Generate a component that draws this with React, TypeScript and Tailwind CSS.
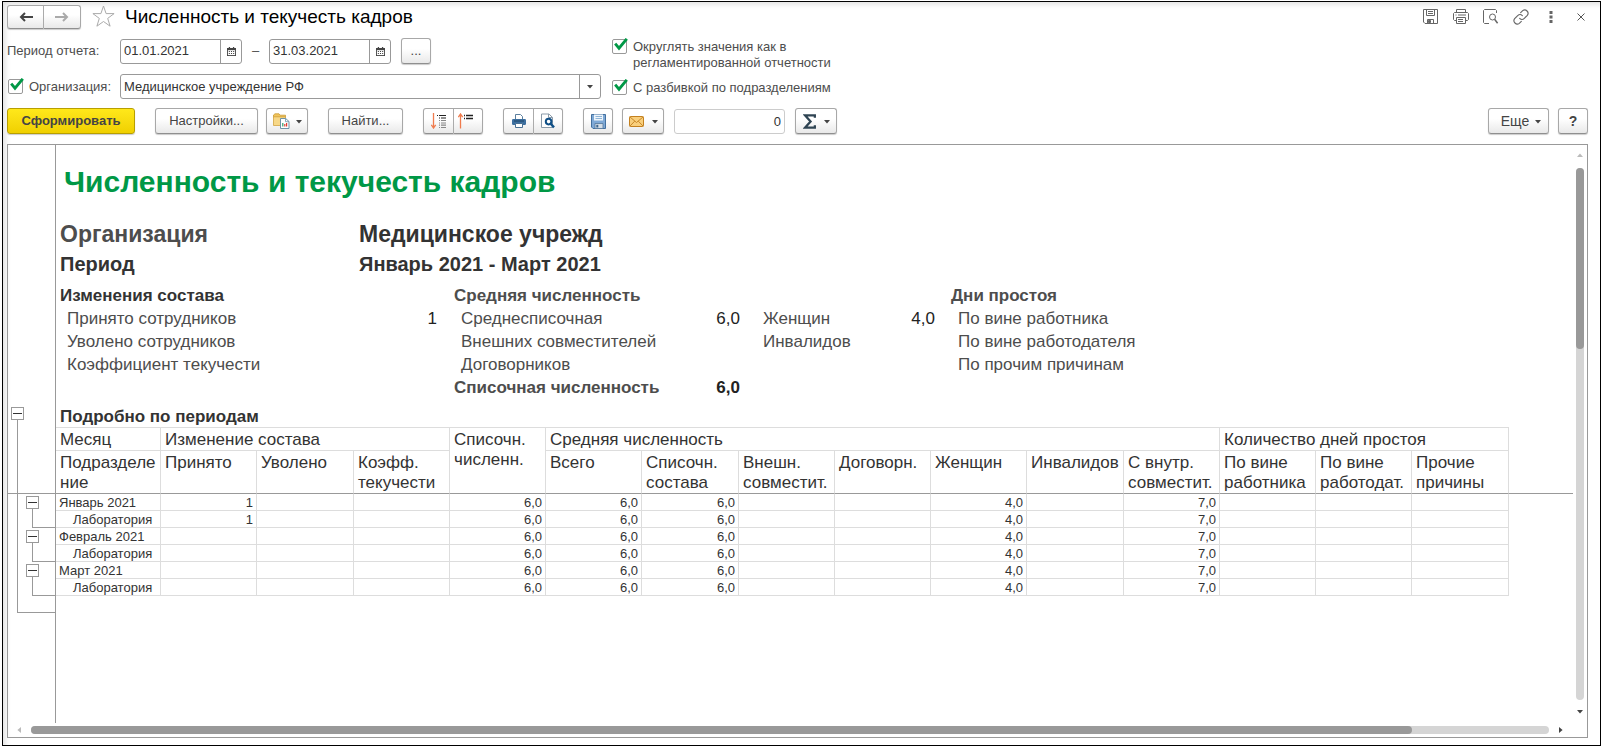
import { useState, type ReactNode } from 'react'
import clsx from 'clsx'

interface ReportRow {
  label: string
  nested?: boolean
  hired?: string
}

const rows: ReportRow[] = [
  { label: 'Январь 2021', hired: '1' },
  { label: 'Лаборатория', nested: true, hired: '1' },
  { label: 'Февраль 2021' },
  { label: 'Лаборатория', nested: true },
  { label: 'Март 2021' },
  { label: 'Лаборатория', nested: true },
]

const rowValues = (row: ReportRow) => [
  row.hired ?? '', '', '', '6,0', '6,0', '6,0', '', '', '4,0', '', '7,0', '', '', '',
]

function Caret({ className }: { className?: string }) {
  return (
    <svg className={clsx('shrink-0', className)} width="6" height="4" viewBox="0 0 6 4" aria-hidden="true">
      <path d="M0 0h6L3 3.6z" fill="#444" />
    </svg>
  )
}

function ToolButton({
  children,
  className,
  label,
}: {
  children: ReactNode
  className?: string
  label?: string
}) {
  return (
    <button
      type="button"
      aria-label={label}
      className={clsx(
        'flex shrink-0 items-center justify-center border border-[#a8a8a8] border-b-[#8f8f8f] bg-linear-to-b from-white from-40% to-[#e9e9e9] text-[#444] shadow-[0_1px_1px_#ccc]',
        className
      )}
    >
      {children}
    </button>
  )
}

function CheckBox({ id }: { id: string }) {
  const [checked, setChecked] = useState(true)
  return (
    <span className="relative block size-[15px] shrink-0">
      <input
        id={id}
        type="checkbox"
        checked={checked}
        onChange={(e) => setChecked(e.target.checked)}
        className="block size-[15px] appearance-none rounded-xs border border-[#999] bg-white"
      />
      {checked && (
        <svg className="pointer-events-none absolute -top-px left-[2px]" width="14" height="13" viewBox="0 0 14 13" aria-hidden="true">
          <path d="M1.2 5.6L5 10.2L12.8.8" fill="none" stroke="#009846" strokeWidth="2.8" />
        </svg>
      )}
    </span>
  )
}

function DateField({ label, value }: { label: string; value: string }) {
  return (
    <div className="flex h-[25px] w-[122px] shrink-0 rounded-[3px] border border-[#999] bg-white">
      <input aria-label={label} defaultValue={value} className="w-[99px] min-w-0 pl-[3px] text-[13px] text-[#333] outline-none" />
      <button type="button" aria-label="Выбрать дату" className="flex flex-1 items-center justify-center border-l border-[#999]">
        <svg width="9" height="9" viewBox="0 0 10 10" aria-hidden="true">
          <path d="M0 1h2V0h1.4v1h3.2V0H8v1h2v9H0z" fill="#444" />
          <path d="M1 3.5h8V9H1z" fill="#fff" />
          <path d="M2 4.5h1.2v1H2zM4.4 4.5h1.2v1H4.4zM6.8 4.5H8v1H6.8zM2 6.8h1.2v1H2zM4.4 6.8h1.2v1H4.4zM6.8 6.8H8v1H6.8z" fill="#444" />
        </svg>
      </button>
    </div>
  )
}

function FolderReportIcon() {
  return (
    <svg width="17" height="16" viewBox="0 0 17 16" aria-hidden="true">
      <path d="M.5 3V2L2 .8h4L7 2.2h5.5v2H.5z" fill="#f2c55c" stroke="#c99a35" strokeWidth=".8" />
      <path d="M.5 3.8h12v8.7H.5z" fill="#f7d888" stroke="#d3a441" strokeWidth=".8" />
      <path d="M7.5 5.5h5.2l3.3 3v7H7.5z" fill="#fff" stroke="#6f93a8" />
      <path d="M12.5 5.5v3.2H16" fill="none" stroke="#6f93a8" strokeWidth=".8" />
      <path d="M9.8 10v3.5" stroke="#2f9e6b" strokeWidth="1.2" />
      <path d="M11.8 11v2.5" stroke="#e03c31" strokeWidth="1.2" />
      <path d="M13.6 10v3.5" stroke="#e03c31" strokeWidth="1.2" />
    </svg>
  )
}

function ExpandIcon() {
  return (
    <svg width="16" height="16" viewBox="0 0 16 16" aria-hidden="true">
      <path d="M2.5 0v14M.3 11.8L2.5 15l2.2-3.2" fill="none" stroke="#ef7b4d" strokeWidth="1.3" />
      <path d="M6 2.5h1M8 2.5h7M8 5h1M10 5h5" stroke="#222" strokeWidth="1.2" />
      <path d="M8 7.5h1M10 7.5h5M8 10h1M10 10h5M8 12.2h1M10 12.2h5M8 14.5h1M10 14.5h5" stroke="#888" strokeWidth="1.2" />
    </svg>
  )
}

function CollapseIcon() {
  return (
    <svg width="16" height="16" viewBox="0 0 16 16" aria-hidden="true">
      <path d="M2.5 15.5V1.5M.3 4.2L2.5 1l2.2 3.2" fill="none" stroke="#ef7b4d" strokeWidth="1.3" />
      <path d="M6 2.5h1M8 2.5h7M6 5.5h1M8 5.5h7" stroke="#222" strokeWidth="1.3" />
    </svg>
  )
}

function PrinterIcon() {
  return (
    <svg width="14" height="14" viewBox="0 0 14 14" aria-hidden="true">
      <path d="M3.5 5.5v-5h5l2 2v3" fill="#fff" stroke="#5b7f9e" />
      <rect y="5" width="14" height="6" rx="1.2" fill="#3d6f9f" />
      <path d="M2 7h10" stroke="#1d4467" />
      <path d="M3.5 9.5h7v4h-7z" fill="#fff" stroke="#4a7194" />
    </svg>
  )
}

function PreviewIcon() {
  return (
    <svg width="14" height="16" viewBox="0 0 14 16" aria-hidden="true">
      <path d="M.5 1h7.4l3.6 3.4v10.1H.5z" fill="#fff" stroke="#8a9aa8" />
      <path d="M7.5 1v3.5h4" fill="none" stroke="#8a9aa8" />
      <circle cx="7.6" cy="8.6" r="2.8" fill="#fff" stroke="#0f4f86" strokeWidth="2" />
      <path d="M9.7 10.8L13 14.4" stroke="#0f4f86" strokeWidth="2.4" />
    </svg>
  )
}

function DisketteIcon() {
  return (
    <svg width="15" height="15" viewBox="0 0 15 15" aria-hidden="true">
      <path d="M.5.5h14v14H2L.5 13z" fill="#7fa9d6" stroke="#43709f" />
      <path d="M3 .5h9v6H3z" fill="#eef5fb" />
      <path d="M4.5 2.5H11M4.5 4.5H11" stroke="#8fb4d6" />
      <path d="M4 9.5h8v5H4z" fill="#d3dde6" stroke="#54779a" strokeWidth=".8" />
      <path d="M5.3 10.8h2v2.7h-2z" fill="#3d6690" />
    </svg>
  )
}

function EnvelopeIcon() {
  return (
    <svg width="15" height="11" viewBox="0 0 15 11" aria-hidden="true">
      <rect x=".5" y=".5" width="14" height="10" rx=".8" fill="#f9cf7c" stroke="#c3801f" />
      <path d="M1 1l6.500 5.500L14 1M1 10l4.700-4.800M14 10L9.300 5.200" fill="none" stroke="#c3801f" strokeWidth=".9" />
    </svg>
  )
}

function SigmaIcon() {
  return (
    <svg width="13" height="15" viewBox="0 0 12 14" aria-hidden="true">
      <path d="M11 3.600V1.200H1.800L7 7l-5.200 5.800H11v-2.400" fill="none" stroke="#2f4453" strokeWidth="2.100" />
    </svg>
  )
}

const action = 'flex w-[15px] justify-center'

function WindowActions() {
  return (
    <div className="flex items-center gap-[15px]">
      <button type="button" aria-label="Сохранить" className={action}>
        <svg width="15" height="15" viewBox="0 0 15 15" fill="none" stroke="#666" aria-hidden="true">
          <path d="M.5.5h14v14H2L.5 13z" />
          <path d="M3.5.5v6h8v-6M5 2.5h5M5 4.5h5M4.5 14.500v-4h6v4" />
          <path d="M5.5 11.5h2v2h-2z" fill="#666" />
        </svg>
      </button>
      <button type="button" aria-label="Печать" className={action}>
        <svg className="shrink-0" width="16" height="15" viewBox="0 0 16 15" fill="none" stroke="#666" aria-hidden="true">
          <path d="M3.5 3.5v-3h9v3M3.5 11.5h-2l-1-1v-6l1-1h13l1 1v6l-1 1h-2M2.5 6h1M5 6h8" />
          <path d="M3.5 8.5h9v6h-9zM5 10.5h5M5 12.5h5" />
        </svg>
      </button>
      <button type="button" aria-label="Предварительный просмотр" className={action}>
        <svg className="shrink-0" width="16" height="15" viewBox="0 0 16 15" fill="none" stroke="#666" aria-hidden="true">
          <path d="M6 14.500H1.500l-1-1V1.500l1-1h11l1 1V4" />
          <circle cx="9.5" cy="8" r="3" />
          <path d="M11.6 10.3l3 4" strokeWidth="1.5" />
        </svg>
      </button>
      <button type="button" aria-label="Получить ссылку" className={action}>
        <svg className="shrink-0" width="16" height="16" viewBox="0 0 24 24" fill="none" stroke="#666" strokeWidth="1.7" strokeLinecap="round" aria-hidden="true">
          <path d="M10 14a5 5 0 0 0 7 0l4.500-4.500a5 5 0 0 0-7-7l-3 3" />
          <path d="M14 10a5 5 0 0 0-7 0l-4.500 4.500a5 5 0 0 0 7 7l3-3" />
        </svg>
      </button>
      <button type="button" aria-label="Меню" className={action}>
        <svg width="4" height="12" viewBox="0 0 4 12" fill="#666" aria-hidden="true">
          <path d="M.5 0h3v3h-3zM.5 4.500h3v3h-3zM.5 9h3v3h-3z" />
        </svg>
      </button>
      <button type="button" aria-label="Закрыть" className={action}>
        <svg width="8" height="8" viewBox="0 0 8 8" stroke="#555" aria-hidden="true">
          <path d="M.5.5l7 7M7.500.5l-7 7" />
        </svg>
      </button>
    </div>
  )
}

function TreeToggle() {
  return (
    <button type="button" aria-label="Свернуть группу" className="flex size-[13px] items-center justify-center border border-[#999] bg-white">
      <span className="block h-px w-[9px] bg-[#333]" />
    </button>
  )
}

// Grouping brackets to the left of the sheet
function GroupGutter() {
  return (
    <div className="w-12 shrink-0 border-r border-[#999]">
      <div className="flex h-[349px] flex-col border-b border-[#999] pt-[262px] pl-[3px]">
        <TreeToggle />
        <div className="ml-[6px] flex-1 border-l border-[#999]" />
      </div>
      <div className="ml-[9px] h-[119px] border-b border-l border-[#999]">
        {[0, 1, 2].map((group) => (
          <div key={group} className="flex h-[34px] flex-col pt-[2px] pl-[8px]">
            <TreeToggle />
            <div className="ml-[6px] flex-1 border-b border-l border-[#999]" />
          </div>
        ))}
      </div>
    </div>
  )
}

function SummaryLine({ label, value, total }: { label: string; value?: string; total?: boolean }) {
  return (
    <div className={clsx('flex h-[23px] items-center justify-between', total ? 'font-bold' : 'pl-[7px]')}>
      <dt>{label}</dt>
      <dd className="text-[#222]">{value}</dd>
    </div>
  )
}

function Summary() {
  return (
    <div className="flex text-[17px] text-[#4d4d4d]">
      <section className="w-[377px]">
        <h3 className="h-[23px] leading-[23px] font-bold text-[#333]">Изменения состава</h3>
        <dl>
          <SummaryLine label="Принято сотрудников" value="1" />
          <SummaryLine label="Уволено сотрудников" />
          <SummaryLine label="Коэффициент текучести" />
        </dl>
      </section>
      <section className="ml-[17px] w-[286px]">
        <h3 className="h-[23px] leading-[23px] font-bold">Средняя численность</h3>
        <dl>
          <SummaryLine label="Среднесписочная" value="6,0" />
          <SummaryLine label="Внешних совместителей" />
          <SummaryLine label="Договорников" />
          <SummaryLine label="Списочная численность" value="6,0" total />
        </dl>
      </section>
      <dl className="ml-4 w-[179px] pt-[23px]">
        <SummaryLine label="Женщин" value="4,0" />
        <SummaryLine label="Инвалидов" />
      </dl>
      <section className="ml-4">
        <h3 className="h-[23px] leading-[23px] font-bold">Дни простоя</h3>
        <dl>
          <SummaryLine label="По вине работника" />
          <SummaryLine label="По вине работодателя" />
          <SummaryLine label="По прочим причинам" />
        </dl>
      </section>
    </div>
  )
}

const th = 'border-r border-b border-[#ddd] pl-1 pt-[2px] align-top font-normal'
const thLast = 'border-r border-b border-r-[#ddd] border-b-[#999] pl-1 pt-[2px] align-top font-normal'

function ReportTable() {
  return (
    <table className="w-full table-fixed border-separate border-spacing-0 text-left text-[#333]">
      <colgroup>
        <col className="w-[105px]" />
        <col className="w-[96px]" />
        <col className="w-[97px]" />
        <col className="w-[96px]" />
        <col className="w-[96px]" />
        <col className="w-[96px]" />
        <col className="w-[97px]" />
        <col className="w-[96px]" />
        <col className="w-[96px]" />
        <col className="w-[96px]" />
        <col className="w-[97px]" />
        <col className="w-[96px]" />
        <col className="w-[96px]" />
        <col className="w-[96px]" />
        <col className="w-[97px]" />
        <col />
      </colgroup>
      <thead className="text-[17px] leading-5">
        <tr className="h-6">
          <th className={clsx(th, 'border-t')}>Месяц</th>
          <th colSpan={3} className={clsx(th, 'border-t')}>Изменение состава</th>
          <th rowSpan={2} className={clsx(thLast, 'border-t border-t-[#ddd]')}>Списочн. численн.</th>
          <th colSpan={7} className={clsx(th, 'border-t')}>Средняя численность</th>
          <th colSpan={3} className={clsx(th, 'border-t')}>Количество дней простоя</th>
          <td />
        </tr>
        <tr className="h-[43px]">
          <th className={clsx(thLast, 'break-all')}>Подразделение</th>
          <th className={thLast}>Принято</th>
          <th className={thLast}>Уволено</th>
          <th className={thLast}>Коэфф. текучести</th>
          <th className={thLast}>Всего</th>
          <th className={thLast}>Списочн. состава</th>
          <th className={thLast}>Внешн. совместит.</th>
          <th className={thLast}>Договорн.</th>
          <th className={thLast}>Женщин</th>
          <th className={thLast}>Инвалидов</th>
          <th className={thLast}>С внутр. совместит.</th>
          <th className={thLast}>По вине работника</th>
          <th className={thLast}>По вине работодат.</th>
          <th className={thLast}>Прочие причины</th>
          <td className="border-b border-[#999]" />
        </tr>
      </thead>
      <tbody className="text-[13px] leading-[15px]">
        {rows.map((row, i) => (
          <tr key={i} className="h-[17px]">
            <th className={clsx('border-r border-b border-[#ddd] pt-px font-normal', row.nested ? 'pl-[17px]' : 'pl-[3px]')}>
              {row.label}
            </th>
            {rowValues(row).map((value, j) => (
              <td key={j} className="border-r border-b border-[#ddd] pt-px pr-[3px] text-right">
                {value}
              </td>
            ))}
            <td />
          </tr>
        ))}
      </tbody>
    </table>
  )
}

function VerticalScroll() {
  return (
    <div className="flex w-[14px] shrink-0 flex-col items-center pt-2">
      <svg width="6" height="4" viewBox="0 0 6 4" aria-hidden="true">
        <path d="M0 4h6L3 .4z" fill="#bbb" />
      </svg>
      <div className="mt-[11px] w-2 flex-1 rounded-full bg-[#d5d5d5]">
        <div className="h-[34%] rounded-full bg-[#999]" />
      </div>
      <Caret className="mt-[10px] mb-[9px]" />
    </div>
  )
}

function HorizontalScroll() {
  return (
    <div className="flex h-[14px] shrink-0 items-center pr-6 pl-[9px]">
      <svg width="4" height="6" viewBox="0 0 4 6" aria-hidden="true">
        <path d="M4 0v6L.4 3z" fill="#bbb" />
      </svg>
      <div className="mr-[10px] ml-[10px] h-2 flex-1 rounded-full bg-[#d5d5d5]">
        <div className="h-2 w-[91%] rounded-full bg-[#999]" />
      </div>
      <svg width="4" height="6" viewBox="0 0 4 6" aria-hidden="true">
        <path d="M0 0v6l3.600-3z" fill="#444" />
      </svg>
    </div>
  )
}

export default function App() {
  return (
    <div className="flex min-h-screen bg-white pt-px pl-[2px] font-['Liberation_Sans',Arial,sans-serif]">
      <main className="flex min-w-0 flex-1 flex-col border border-black pr-3 pb-[7px] pl-1 shadow-[inset_6px_6px_6px_-4px_#ddd]">
        <header className="flex h-[29px] items-center">
          <div className="flex">
            <ToolButton label="Назад" className="h-[24px] w-[37px] rounded-l-[3px]">
              <svg width="14" height="10" viewBox="0 0 14 10" aria-hidden="true">
                <path d="M14 5H3M6 1L2 5l4 4" fill="none" stroke="#444" strokeWidth="2" />
              </svg>
            </ToolButton>
            <ToolButton label="Вперед" className="h-[24px] w-[37px] rounded-r-[3px] border-l-0">
              <svg width="14" height="10" viewBox="0 0 14 10" aria-hidden="true">
                <path d="M0 5h11M8 1l4 4-4 4" fill="none" stroke="#aaa" strokeWidth="2" />
              </svg>
            </ToolButton>
          </div>
          <button type="button" aria-label="В избранное" className="ml-[11px]">
            <svg width="23" height="23" viewBox="0 0 23 23" aria-hidden="true">
              <path d="M11.500 1l2.600 7.600h8l-6.400 4.800 2.400 7.800-6.600-4.700-6.600 4.700 2.400-7.800L.9 8.600h8z" fill="#fff" stroke="#aaa" />
            </svg>
          </button>
          <h1 className="ml-[10px] flex-1 text-[19px] leading-6 text-black">Численность и текучесть кадров</h1>
          <WindowActions />
        </header>

        <div className="flex pt-[7px] text-[13px] text-[#4d4d4d]">
          <div className="w-[594px] shrink-0">
            <div className="flex h-[26px] items-center">
              <span className="w-[113px]">Период отчета:</span>
              <DateField label="Начало периода" value="01.01.2021" />
              <span className="w-[27px] text-center">–</span>
              <DateField label="Конец периода" value="31.03.2021" />
              <ToolButton label="Выбрать период" className="ml-[10px] h-[26px] w-[30px] rounded-[3px]">...</ToolButton>
            </div>
            <div className="mt-[10px] flex h-[25px] items-center">
              <div className="flex w-[113px] items-center gap-[6px] pl-px">
                <CheckBox id="org-enabled" />
                <label htmlFor="org-enabled">Организация:</label>
              </div>
              <div className="relative h-[25px] flex-1">
                <select
                  aria-label="Организация"
                  className="h-[25px] w-full appearance-none rounded-[3px] border border-[#999] bg-white pl-[3px] text-[13px] text-[#333]"
                >
                  <option>Медицинское учреждение РФ</option>
                </select>
                <span className="pointer-events-none absolute top-px right-px bottom-px flex w-[21px] items-center justify-center border-l border-[#999]">
                  <Caret />
                </span>
              </div>
            </div>
          </div>
          <div className="ml-[11px] w-[240px] pt-px">
            <div className="flex gap-[6px]">
              <CheckBox id="round-values" />
              <label htmlFor="round-values" className="leading-4">Округлять значения как в регламентированной отчетности</label>
            </div>
            <div className="mt-[9px] flex gap-[6px]">
              <CheckBox id="by-department" />
              <label htmlFor="by-department" className="leading-4">С разбивкой по подразделениям</label>
            </div>
          </div>
        </div>

        <div className="mt-[9px] flex items-center text-[13px]">
          <button
            type="button"
            className="h-[26px] w-[128px] rounded-[3px] border border-[#b89f00] bg-linear-to-b from-[#ffe81a] to-[#f0d000] font-bold text-[#444] shadow-[0_1px_1px_#ccc]"
          >
            Сформировать
          </button>
          <ToolButton className="ml-5 h-[26px] w-[103px] rounded-[3px]">Настройки...</ToolButton>
          <ToolButton label="Варианты отчета" className="ml-2 h-[26px] w-[42px] gap-[6px] rounded-[3px]">
            <FolderReportIcon />
            <Caret className="mt-[2px]" />
          </ToolButton>
          <ToolButton className="ml-5 h-[26px] w-[75px] rounded-[3px]">Найти...</ToolButton>
          <ToolButton label="Развернуть" className="ml-5 h-[26px] w-[31px] rounded-l-[3px]">
            <ExpandIcon />
          </ToolButton>
          <ToolButton label="Свернуть" className="h-[26px] w-[29px] rounded-r-[3px] border-l-0 pr-1">
            <CollapseIcon />
          </ToolButton>
          <ToolButton label="Печать" className="ml-5 h-[26px] w-[31px] rounded-l-[3px]">
            <PrinterIcon />
          </ToolButton>
          <ToolButton label="Просмотр" className="h-[26px] w-[29px] rounded-r-[3px] border-l-0">
            <PreviewIcon />
          </ToolButton>
          <ToolButton label="Сохранить" className="ml-5 h-[26px] w-[30px] rounded-[3px]">
            <DisketteIcon />
          </ToolButton>
          <ToolButton label="Отправить" className="ml-[9px] h-[26px] w-[42px] gap-2 rounded-[3px]">
            <EnvelopeIcon />
            <Caret className="mt-[2px]" />
          </ToolButton>
          <input
            aria-label="Сумма"
            readOnly
            value="0"
            className="ml-[10px] h-[25px] w-[111px] rounded-[3px] border border-[#ccc] bg-white pr-[3px] text-right text-[#333]"
          />
          <ToolButton label="Показатели" className="ml-[10px] h-[26px] w-[42px] gap-2 rounded-[3px]">
            <SigmaIcon />
            <Caret className="mt-[2px]" />
          </ToolButton>
          <ToolButton className="ml-auto h-[26px] w-[61px] gap-[6px] rounded-[3px] pl-[5px] text-[14px]">
            Еще
            <Caret className="mt-[2px]" />
          </ToolButton>
          <ToolButton className="ml-[9px] h-[26px] w-[30px] rounded-[3px] text-[14px] font-bold">?</ToolButton>
        </div>

        <div className="mt-[10px] flex flex-1 flex-col border border-[#999]">
          <div className="flex flex-1">
            <GroupGutter />
            <article className="min-w-0 flex-1 pt-5">
              <h2 className="pl-2 text-[30px] leading-[34px] font-bold text-[#009846]">Численность и текучесть кадров</h2>
              <dl className="mt-5 grid grid-cols-[299px_1fr] pl-1 leading-[30px] font-bold text-[#333]">
                <dt className="text-[23px] text-[#4d4d4d]">Организация</dt>
                <dd className="text-[23px]">Медицинское учрежд</dd>
                <dt className="text-[20px]">Период</dt>
                <dd className="text-[20px]">Январь 2021 - Март 2021</dd>
              </dl>
              <div className="mt-[5px] pl-1">
                <Summary />
              </div>
              <h3 className="mt-[7px] pl-1 text-[17px] leading-[21px] font-bold text-[#333]">Подробно по периодам</h3>
              <ReportTable />
            </article>
            <VerticalScroll />
          </div>
          <HorizontalScroll />
        </div>
      </main>
    </div>
  )
}
